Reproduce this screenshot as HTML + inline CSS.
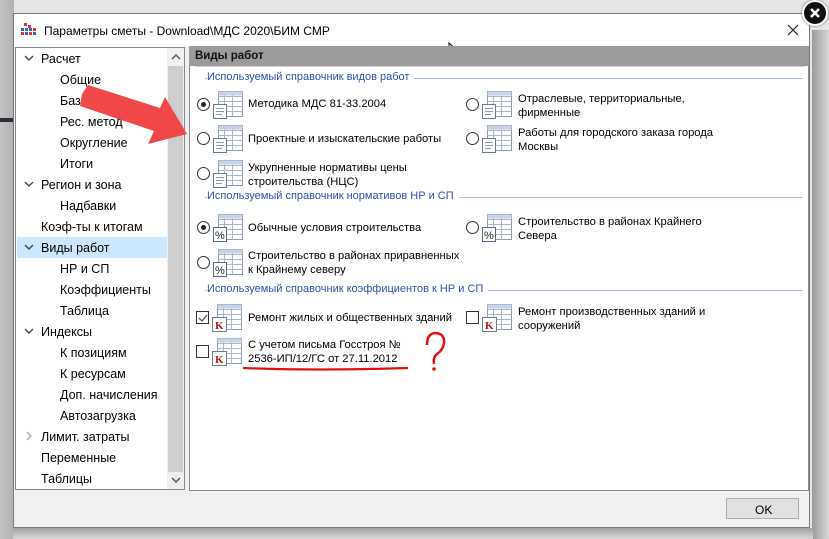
<!DOCTYPE html>
<html><head><meta charset="utf-8"><style>
*{margin:0;padding:0;box-sizing:border-box}
body{width:829px;height:539px;overflow:hidden;position:relative;font-family:"Liberation Sans",sans-serif;background:linear-gradient(90deg,#c4c4c4 0,#b0b0b0 14px,#e6e6e6 14px);}
.abs{position:absolute}
.t{position:absolute;font-size:11.2px;color:#000;white-space:nowrap;line-height:14px}
.tr{position:absolute;font-size:12.5px;color:#000;white-space:nowrap}
.g{position:absolute;font-size:11px;color:#2f4fa8;white-space:nowrap;background:#fff;padding-right:5px}
.gl{position:absolute;height:1px;background:#a8bce0}
.rad{position:absolute;width:13px;height:13px;border:1px solid #333;border-radius:50%;background:#fff}
.rad.on::after{content:"";position:absolute;left:3px;top:3px;width:5px;height:5px;border-radius:50%;background:#222}
.chk{position:absolute;width:13px;height:13px;border:1px solid #333;background:#fff}
</style></head><body>
<div class="abs" style="left:0;top:118px;width:14px;height:4px;background:#2a2f38"></div>
<div class="abs" style="left:812px;top:118px;width:17px;height:4px;background:#2a2f38"></div>
<div class="abs" style="left:812px;top:30px;width:17px;height:509px;background:linear-gradient(90deg,#9a9a9a,#d8d8d8)"></div>
<div class="abs" style="left:13px;top:528px;width:800px;height:11px;background:linear-gradient(#a0a0a0,#dadada)"></div>
<!-- dialog -->
<div class="abs" style="left:13px;top:13px;width:797px;height:515px;background:#f0f0f0;border:1px solid #7a7a7a"></div>
<div class="abs" style="left:14px;top:14px;width:795px;height:33px;background:#fff"></div>
<svg class="abs" style="left:21px;top:23px" width="15" height="14"><g fill="#d33"><rect x="3" y="0" width="3" height="3"/><rect x="7" y="2" width="3" height="3"/></g><g fill="#3a5fc8"><rect x="0" y="5" width="3" height="3"/><rect x="4" y="5" width="3" height="3"/><rect x="8" y="5" width="3" height="3"/><rect x="12" y="5" width="3" height="3" fill="#d33"/><rect x="0" y="9" width="3" height="3" fill="#d33"/><rect x="4" y="9" width="3" height="3"/><rect x="8" y="9" width="3" height="3" fill="#d33"/><rect x="12" y="9" width="3" height="3"/></g></svg>
<div class="t" style="left:44px;top:24px;font-size:12px">Параметры сметы - Download\МДС 2020\БИМ СМР</div>
<svg class="abs" style="left:787px;top:24px" width="12" height="12"><path d="M1 1L11 11M11 1L1 11" stroke="#222" stroke-width="1.2"/></svg>
<svg class="abs" style="left:448px;top:42px" width="14" height="20"><path d="M1 1L1 16L5 12L8 19L10 18L7 11L12 11Z" fill="#fff" stroke="#000"/></svg>
<!-- tree -->
<div class="abs" style="left:15px;top:47px;width:170px;height:443px;background:#fff;border:1px solid #828790"></div>
<div class="abs" style="left:167px;top:48px;width:17px;height:441px;background:#f0f0f0"></div>
<div class="abs" style="left:168px;top:66px;width:15px;height:406px;background:#cdcdcd"></div>
<svg class="abs" style="left:170px;top:52px" width="12" height="10"><path d="M2 7L6 3L10 7" stroke="#555" stroke-width="1.5" fill="none"/></svg>
<svg class="abs" style="left:170px;top:475px" width="12" height="10"><path d="M2 3L6 7L10 3" stroke="#555" stroke-width="1.5" fill="none"/></svg>
<div class="abs" style="left:17px;top:237px;width:150px;height:21px;background:#cce8ff"></div>
<svg class="abs" style="left:24px;top:54px" width="10" height="420"><g stroke="#444" stroke-width="1.4" fill="none"><path d="M1 2L5 6L9 2"/><path d="M1 128L5 132L9 128"/><path d="M1 191L5 195L9 191"/><path d="M1 275L5 279L9 275"/><path d="M3 378L7 382L3 386" stroke="#aaa"/></g></svg>
<div class="tr" style="left:41px;top:52px">Расчет</div>
<div class="tr" style="left:60px;top:73px">Общие</div>
<div class="tr" style="left:60px;top:94px">Баз. метод</div>
<div class="tr" style="left:60px;top:115px">Рес. метод</div>
<div class="tr" style="left:60px;top:136px">Округление</div>
<div class="tr" style="left:60px;top:157px">Итоги</div>
<div class="tr" style="left:41px;top:178px">Регион и зона</div>
<div class="tr" style="left:60px;top:199px">Надбавки</div>
<div class="tr" style="left:41px;top:220px">Коэф-ты к итогам</div>
<div class="tr" style="left:41px;top:241px">Виды работ</div>
<div class="tr" style="left:60px;top:262px">НР и СП</div>
<div class="tr" style="left:60px;top:283px">Коэффициенты</div>
<div class="tr" style="left:60px;top:304px">Таблица</div>
<div class="tr" style="left:41px;top:325px">Индексы</div>
<div class="tr" style="left:60px;top:346px">К позициям</div>
<div class="tr" style="left:60px;top:367px">К ресурсам</div>
<div class="tr" style="left:60px;top:388px">Доп. начисления</div>
<div class="tr" style="left:60px;top:409px">Автозагрузка</div>
<div class="tr" style="left:41px;top:430px">Лимит. затраты</div>
<div class="tr" style="left:41px;top:451px">Переменные</div>
<div class="tr" style="left:41px;top:472px">Таблицы</div>
<!-- right panel -->
<div class="abs" style="left:189px;top:46px;width:620px;height:445px;background:#fff;border:1px solid #8a8a8a"></div>
<div class="abs" style="left:189px;top:46px;width:620px;height:20px;background:#9b9b9b"></div>
<div class="t" style="left:195px;top:49px;font-weight:bold;color:#111;font-size:11.5px">Виды работ</div>
<div class="abs" style="left:195px;top:66px;width:610px;height:1px;background:#d0d0d0"></div>

<div class="gl" style="left:205px;top:78px;width:598px"></div>
<div class="g" style="left:207px;top:71px">Используемый справочник видов работ</div>
<div class="gl" style="left:205px;top:197px;width:598px"></div>
<div class="g" style="left:207px;top:190px">Используемый справочник нормативов НР и СП</div>
<div class="gl" style="left:205px;top:290px;width:598px"></div>
<div class="g" style="left:207px;top:283px">Используемый справочник коэффициентов к НР и СП</div>

<svg width="0" height="0" style="position:absolute"><defs>
<g id="tb"><rect x="5.5" y="0.5" width="24" height="25" fill="#fff" stroke="#8a9ab0"/><g stroke="#a8b6c8"><path d="M5.5 5.5H29.5M5.5 10.5H29.5M5.5 15.5H29.5M5.5 20.5H29.5M11.5 0.5V25.5M19.5 0.5V25.5"/></g><rect x="5.5" y="0.5" width="24" height="4" fill="#c8d4e4"/></g>
<g id="doc"><use href="#tb"/><rect x="0.5" y="13.5" width="13" height="14" fill="#fff" stroke="#6a7a90"/><path d="M3 17.5H11M3 20.5H11M3 23.5H9" stroke="#8a9ab0"/></g>
<g id="pc"><use href="#tb"/><rect x="0.5" y="13.5" width="13" height="14" fill="#fff" stroke="#5a6a80"/><text x="2" y="25" font-size="11" font-family="Liberation Sans" fill="#222">%</text></g>
<g id="kk"><use href="#tb"/><rect x="0.5" y="13.5" width="14" height="14" fill="#fff" stroke="#6a7a90"/><text x="3" y="25" font-size="11" font-weight="bold" font-family="Liberation Serif" fill="#b01818">K</text></g>
</defs></svg>

<div class="rad on" style="left:197px;top:98px"></div>
<svg class="abs" style="left:213px;top:91px" width="31" height="29"><use href="#doc"/></svg>
<div class="t" style="left:248px;top:97px">Методика МДС 81-33.2004</div>
<div class="rad" style="left:466px;top:98px"></div>
<svg class="abs" style="left:482px;top:91px" width="31" height="29"><use href="#doc"/></svg>
<div class="t" style="left:518px;top:92px">Отраслевые, территориальные,<br>фирменные</div>

<div class="rad" style="left:197px;top:132px"></div>
<svg class="abs" style="left:213px;top:125px" width="31" height="29"><use href="#doc"/></svg>
<div class="t" style="left:248px;top:132px">Проектные и изыскательские работы</div>
<div class="rad" style="left:466px;top:132px"></div>
<svg class="abs" style="left:482px;top:125px" width="31" height="29"><use href="#doc"/></svg>
<div class="t" style="left:518px;top:126px">Работы для городского заказа города<br>Москвы</div>

<div class="rad" style="left:197px;top:167px"></div>
<svg class="abs" style="left:213px;top:160px" width="31" height="29"><use href="#doc"/></svg>
<div class="t" style="left:248px;top:161px">Укрупненные нормативы цены<br>строительства (НЦС)</div>

<div class="rad on" style="left:197px;top:221px"></div>
<svg class="abs" style="left:213px;top:214px" width="31" height="29"><use href="#pc"/></svg>
<div class="t" style="left:248px;top:221px">Обычные условия строительства</div>
<div class="rad" style="left:466px;top:221px"></div>
<svg class="abs" style="left:482px;top:214px" width="31" height="29"><use href="#pc"/></svg>
<div class="t" style="left:518px;top:215px">Строительство в районах Крайнего<br>Севера</div>

<div class="rad" style="left:197px;top:256px"></div>
<svg class="abs" style="left:213px;top:249px" width="31" height="29"><use href="#pc"/></svg>
<div class="t" style="left:248px;top:249px">Строительство в районах приравненных<br>к Крайнему северу</div>

<div class="chk" style="left:196px;top:311px"></div>
<svg class="abs" style="left:197px;top:312px" width="12" height="12"><path d="M2 6L5 9L10 3" stroke="#555" stroke-width="1.3" fill="none"/></svg>
<svg class="abs" style="left:212px;top:304px" width="31" height="29"><use href="#kk"/></svg>
<div class="t" style="left:248px;top:311px">Ремонт жилых и общественных зданий</div>
<div class="chk" style="left:466px;top:311px"></div>
<svg class="abs" style="left:482px;top:304px" width="31" height="29"><use href="#kk"/></svg>
<div class="t" style="left:518px;top:305px">Ремонт производственных зданий и<br>сооружений</div>

<div class="chk" style="left:196px;top:345px"></div>
<svg class="abs" style="left:212px;top:338px" width="31" height="29"><use href="#kk"/></svg>
<div class="t" style="left:248px;top:338px">С учетом письма Госстроя №<br>2536-ИП/12/ГС от 27.11.2012</div>

<!-- annotations -->
<svg class="abs" style="left:0;top:0" width="829" height="539">
<path d="M243 368Q320 371 408 368" stroke="#e01010" stroke-width="2.2" fill="none"/>
<path d="M427 345Q427 333 436 333Q445 334 444 343Q443 350 437 354Q433 357 434 364" stroke="#e01010" stroke-width="2.5" fill="none"/>
<circle cx="434" cy="369" r="1.8" fill="#e01010"/>
<path d="M82 94L88 85L160 108L165 97L187 134L148 144L154 131L80 106Z" fill="#f04848"/>
</svg>

<!-- footer -->
<div class="abs" style="left:726px;top:498px;width:73px;height:21px;background:#e1e1e1;border:1px solid #adadad"></div>
<div class="t" style="left:755px;top:503px;font-size:12px">OK</div>

<!-- close circle -->
<div class="abs" style="left:802px;top:0px;width:26px;height:26px;border-radius:50%;background:#111;border:2px solid #fff;box-shadow:0 0 2px #555"></div>
<svg class="abs" style="left:808px;top:6px" width="14" height="14"><path d="M3 3L11 11M11 3L3 11" stroke="#fff" stroke-width="2.6"/></svg>
</body></html>
